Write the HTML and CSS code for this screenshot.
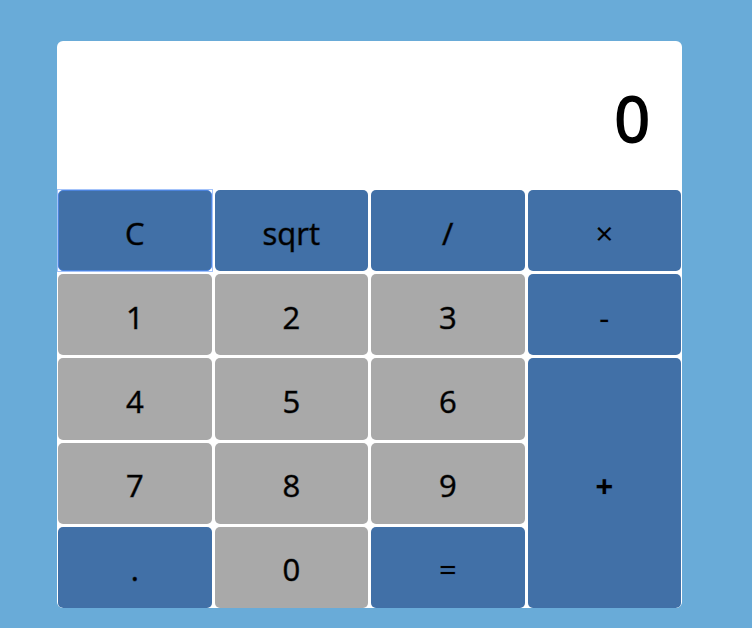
FILE: index.html
```html
<!DOCTYPE html>
<html lang="en">
<head>
<meta charset="utf-8">
<title>Calculator</title>
<link rel="stylesheet" href="styles.css">
</head>
<body>
<main class="calculator">
  <output class="display">0</output>
  <div class="keys">
    <button type="button" class="key operator active">C</button>
    <button type="button" class="key operator">sqrt</button>
    <button type="button" class="key operator">/</button>
    <button type="button" class="key operator thin">×</button>
    <button type="button" class="key">1</button>
    <button type="button" class="key">2</button>
    <button type="button" class="key">3</button>
    <button type="button" class="key operator thin">-</button>
    <button type="button" class="key">4</button>
    <button type="button" class="key">5</button>
    <button type="button" class="key">6</button>
    <button type="button" class="key operator thin plus">+</button>
    <button type="button" class="key">7</button>
    <button type="button" class="key">8</button>
    <button type="button" class="key">9</button>
    <button type="button" class="key operator">.</button>
    <button type="button" class="key">0</button>
    <button type="button" class="key operator thin">=</button>
  </div>
</main>
</body>
</html>
```

FILE: styles.css
```css
* {
  box-sizing: border-box;
}

body {
  margin: 0;
  padding: 41px 70px 20px 57px;
  background: #69abd8;
  font-family: "Segoe UI", "Open Sans", "Noto Sans", sans-serif;
  color: #000;
}

.calculator {
  background: #fff;
  border-radius: 6px;
  overflow: hidden;
}

.display {
  display: block;
  padding: 33px 32px 28px;
  font-size: 62px;
  line-height: 88px;
  text-align: right;
  -webkit-text-stroke: 2px #000;
}

.keys {
  display: grid;
  grid-template-columns: repeat(4, 1fr);
  grid-auto-rows: 1fr;
  gap: 3px;
  min-height: 418px;
  padding: 0 1px;
}

.key {
  margin: 0;
  padding: 4px 0 0;
  border: 0;
  border-radius: 5px;
  background: #a9a9a9;
  color: inherit;
  font: inherit;
  font-size: 31px;
  line-height: 40px;
  -webkit-text-stroke: 1px rgb(0 0 0 / 45%);
}

.operator {
  background: #4170a7;
}

.thin {
  -webkit-text-stroke: 1px rgb(0 0 0 / 15%);
}

.active {
  position: relative;
  border: 1px solid #4b83dc;
}

/* square focus ring around the rounded key */
.active::after {
  content: "";
  position: absolute;
  inset: -2px;
  border: 1px solid #a4c3fa;
}

.plus {
  grid-row: span 3;
  font-weight: 700;
}
```
